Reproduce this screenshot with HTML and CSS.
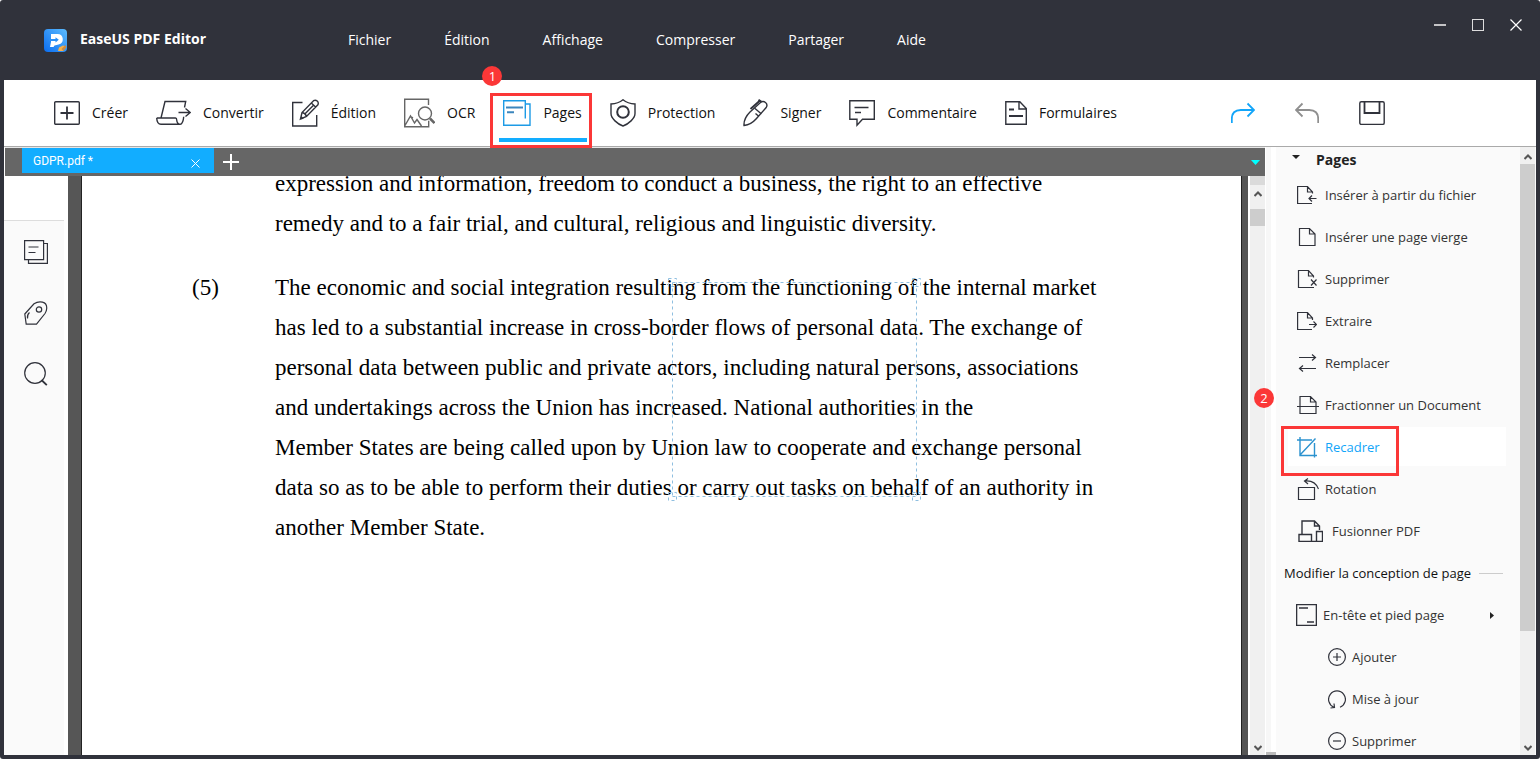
FILE: index.html
```html
<!DOCTYPE html>
<html lang="fr">
<head>
<meta charset="utf-8">
<title>EaseUS PDF Editor</title>
<link rel="stylesheet" href="styles.css">
</head>
<body>
<div class="window">
  <header class="titlebar">
    <svg class="logo" width="23" height="23" viewBox="0 0 23 23">
      <defs><linearGradient id="lg" x1="1" y1="0" x2="0" y2="1"><stop offset="0" stop-color="#5cbcff"/><stop offset="1" stop-color="#0a6df0"/></linearGradient></defs>
      <rect width="23" height="23" rx="4" fill="url(#lg)"/>
      <path d="M7 5h6.500a5.300 5.300 0 0 1 1 10.500L10.500 16.500 9.500 18H6l1-5z" fill="#fff"/>
      <path d="M5 10h6.500V8.300l3.300 2.500-3.300 2.700V12H5z" fill="#2b8ff5"/>
      <path d="M14 22l1-3.500 4-2 3 1-3 4.500z" fill="#f6b04a"/><path d="M17.500 20l4-4 1 2-3 4z" fill="#c98b45"/>
    </svg>
    <h1 class="app-name">EaseUS PDF Editor</h1>
    <nav class="menu">
      <button>Fichier</button><button>Édition</button><button>Affichage</button><button>Compresser</button><button>Partager</button><button>Aide</button>
    </nav>
    <div class="controls">
      <button aria-label="Réduire"><svg width="12" height="12"><path d="M0 6h12" stroke="#c4c4c6" stroke-width="2"/></svg></button>
      <button aria-label="Agrandir"><svg width="12" height="12"><rect x=".5" y=".5" width="11" height="11" fill="none" stroke="#ddd"/></svg></button>
      <button aria-label="Fermer"><svg width="12" height="12"><path d="M.5.5l11 11M11.500.5l-11 11" stroke="#fff" stroke-width="1.200"/></svg></button>
    </div>
  </header>

  <div class="toolbar">
    <button class="tool"><svg class="ico" width="26" height="28" viewBox="0 0 26 28"><rect x=".7" y="2.700" width="24.600" height="22.600" rx="1"/><path d="M6.500 14h13M13 7.500v13" stroke-width="1.800"/></svg>Créer</button>
    <button class="tool"><svg class="ico" width="35" height="28" viewBox="0 0 35 28"><path d="M28.500 8.500l1.200-6H9L5 19M.7 19h18.800q1.200 0 1.200 2 .3 4.300 4 4.300H5q-4 0-4.300-6.300M24.700 25.300q2.500-1.300 3-7.500M22.500 13.500H34M29.500 9.500l4.800 4-4.800 4"/></svg>Convertir</button>
    <button class="tool"><svg class="ico" width="27" height="28" viewBox="0 0 27 28"><path d="M10.500 3.500H.7v23.500h24V16"/><path d="M8.500 20l1.500-6.500L21.500 1.700q2-1.200 3.700.4t.7 3.700L14.500 17.500zM10 13.500q3.500.5 4.500 4M19.300 4l4.300 4M12.300 15.500l9-9M8.500 20l2.200-.7-1.500-1.500z"/></svg>Édition</button>
    <button class="tool"><svg class="ico gray" width="31" height="30" viewBox="0 0 31 30"><path d="M24.500 7V1.200H.7v27.600h24v-6M1 27.500l5.500-9.500 4 7 2.500-3.500 4.500 6.500M6 18.500l3 1.500"/><circle cx="21" cy="15.500" r="6.500"/><path d="M26 20.500l4.500 4.500" stroke-width="2.500"/></svg>OCR</button>
    <button class="tool active"><svg class="ico blue" width="28" height="28" viewBox="0 0 28 28"><path d="M.7 1.700h21.600v3.300H27v21.300H.7zM22.300 5v14.500"/><path d="M3 8.500h17M4 13.200h7" stroke="#3c86bd" stroke-width="2"/></svg>Pages
      <span class="mark mark-tool"></span><span class="step step-one">1</span></button>
    <button class="tool"><svg class="ico" width="26" height="28" viewBox="0 0 26 28"><path d="M13 .8c3 2.500 7 4 12 4.200v9.500c0 5-6.500 10.500-12 12.500C7.500 25 1 19.500 1 14.500V5C6 4.800 10 3.300 13 .8z"/><circle cx="13" cy="13" r="5.800" stroke-width="2"/></svg>Protection</button>
    <button class="tool"><svg class="ico" width="25" height="28" viewBox="0 0 25 28"><path d="M1 26.500c-.3-5 2-9.500 6-13.500L17.500 3.500q2.500-2 5 0t.7 5L13.500 19.500c-3.500 4-7.500 6.500-12.500 7zM12 9.500l6.500 5.500M12.500 14.500l3.500 3"/><path d="M7.500 10L17 1.500M15.500.8l3 2" stroke-width="1.900"/></svg>Signer</button>
    <button class="tool"><svg class="ico" width="26" height="28" viewBox="0 0 26 28"><path d="M.8 1.700h24.500v18.600H13.500L8 26.200v-5.900H.8z"/><path d="M5.500 8.500h14M6 13.500h6" stroke-width="1.700"/></svg>Commentaire</button>
    <button class="tool"><svg class="ico" width="22" height="28" viewBox="0 0 22 28"><path d="M.8 2.700h14l6.500 6.800v15.800H.8zM14 3v7h7"/><path d="M4 10.500h5M4 17h14" stroke-width="1.900"/></svg>Formulaires</button>
    <div class="history">
      <button aria-label="Rétablir"><svg class="ico bright" width="24" height="22" viewBox="0 0 24 22"><path d="M.8 21v-4q0-9 9-9H23M16.500 1.500l6.500 6.500-6.500 6.500" stroke-width="1.800"/></svg></button>
      <button aria-label="Annuler"><svg class="ico dim" width="24" height="22" viewBox="0 0 24 22"><path d="M23.200 21v-4q0-9-9-9H1M7.500 1.500L1 8l6.500 6.500" stroke-width="1.800"/></svg></button>
      <button aria-label="Enregistrer"><svg class="ico" width="26" height="26" viewBox="0 0 26 26"><rect x=".8" y="1.800" width="24.400" height="22.600" rx="1.500"/><path d="M5.500 2v11h15V2" stroke-width="1.800"/></svg></button>
    </div>
  </div>

  <div class="body">
    <div class="workspace">
      <div class="tabs">
        <div class="tab"><button class="tab-name">GDPR.pdf *</button><button class="tab-close" aria-label="Fermer l'onglet"><svg width="9" height="9"><path d="M.5.5l8 8M8.500.5l-8 8" stroke="#fff"/></svg></button></div>
        <button class="tab-add" aria-label="Nouvel onglet"><svg width="16" height="16"><path d="M0 8h16M8 0v16" stroke="#fff" stroke-width="2"/></svg></button>
        <button class="tab-list" aria-label="Liste des onglets"><svg width="9" height="5"><path d="M0 0h9L4.500 5z" fill="#0ff"/></svg></button>
      </div>
      <div class="viewer">
        <aside class="rail">
          <button aria-label="Vignettes"><svg class="ico thin" width="24" height="24" viewBox="0 0 24 24"><path d="M.6.600h19v19h-19zM20 3.500h3.400v19.900H4.500V20"/><path d="M4.500 7h10M4.500 12.500h7"/></svg></button>
          <button aria-label="Signets"><svg class="ico thin" width="24" height="24" viewBox="0 0 24 24"><path d="M.8 13L10 2.800Q14 .2 18.500 1.200t4.200 6.300q-.2 3-1.700 5L12.500 23.200H2.200z"/><circle cx="15" cy="8.500" r="2.700"/><path d="M3.500 17.500q-.5-4 2-6"/></svg></button>
          <button aria-label="Rechercher"><svg class="ico thin" width="24" height="24" viewBox="0 0 24 24"><circle cx="11" cy="11" r="10.300"/><path d="M17.500 18l5.300 5.200" stroke-width="1.800"/></svg></button>
        </aside>
        <main class="canvas">
          <article class="page">
            <p>expression and information, freedom to conduct a business, the right to an effective<br>remedy and to a fair trial, and cultural, religious and linguistic diversity.</p>
            <p><span class="num">(5)</span>The economic and social integration resulting from the functioning of the internal market<br>has led to a substantial increase in cross-border flows of personal data. The exchange of<br>personal data between public and private actors, including natural persons, associations<br>and undertakings across the Union has increased. National authorities in the<br>Member States are being called upon by Union law to cooperate and exchange personal<br>data so as to be able to perform their duties or carry out tasks on behalf of an authority in<br>another Member State.</p>
            <svg class="crop" width="254" height="224" viewBox="0 0 254 224"><path d="M4.500 4.500h244M4.500 218.500h244M4.500 4.500v214M248.500 4.500v214M.5.5h8v8h-8zM244.500.5h8v8h-8zM.5 214.500h8v8h-8zM244.500 214.500h8v8h-8z"/></svg>
          </article>
        </main>
        <div class="scroll scroll-doc">
          <svg width="8" height="6"><path d="M.5 5L4 1.500 7.500 5"/></svg><span class="thumb"></span><svg width="8" height="6"><path d="M.5 1L4 4.500 7.500 1"/></svg>
        </div>
      </div>
    </div>

    <aside class="panel">
      <div class="panel-main">
        <h2><svg width="8" height="5"><path d="M0 0h8L4 4z" fill="#222"/></svg>Pages</h2>
        <button class="row"><svg class="ico thin" width="20" height="20" viewBox="0 0 20 20"><path d="M15 18.500H.6V1.500h9.900l5 5.500v1.500M10.500 1.500V7h5M12 13.500h7.500M15 10.500l-3 3 3 3"/></svg>Insérer à partir du fichier</button>
        <button class="row"><svg class="ico thin" width="20" height="20" viewBox="0 0 20 20"><path d="M2.500 1.500h10l5.500 5.500v11.500H2.500zM12.500 1.500V7h5.500"/></svg>Insérer une page vierge</button>
        <button class="row"><svg class="ico thin" width="20" height="20" viewBox="0 0 20 20"><path d="M17 18.500H1.500V1.500h10l5 5.500v1.500M11.500 1.500V7h5M14 10.500l5.500 6M19.500 10.500l-5.500 6"/></svg>Supprimer</button>
        <button class="row"><svg class="ico thin" width="20" height="20" viewBox="0 0 20 20"><path d="M15 18.500H.6V1.500h9.900l5 5.500v2M10.500 1.500V7h5M12 13.500h7.500M16.500 10.500l3 3-3 3"/></svg>Extraire</button>
        <button class="row"><svg class="ico thin" width="20" height="20" viewBox="0 0 20 20"><path d="M2 4.500h16.500M15 1.500l3.500 3-3.500 3M2.500 15.500H19M6 12.500l-3.500 3 3.500 3"/></svg>Remplacer</button>
        <button class="row"><svg class="ico thin wide" width="22" height="20" viewBox="0 0 22 20"><path d="M3 9.500v-8h10.500L19 7v11.500H3V12M13.500 1.500V7H19M3 9.500V18M0 11.500h22"/></svg>Fractionner un Document</button>
        <button class="row selected"><svg class="ico thin" width="20" height="22" viewBox="0 0 20 22"><path d="M0 4h15M3 1v18.500h17M17.500 7v14.500M3 19L18.500 2.500" stroke-width="1.400"/></svg>Recadrer
          <span class="mark mark-row"></span><span class="step step-two">2</span></button>
        <button class="row"><svg class="ico thin wide" width="22" height="22" viewBox="0 0 22 22"><path d="M1.500 9.500h16v12h-16zM8 3q10-1 13.500 8M11 .5L7.500 3 11 6"/></svg>Rotation</button>
        <button class="row merge"><svg class="ico thin" width="25" height="22" viewBox="0 0 25 22"><path d="M4 14V1h12.500l5 5v4M16.500 1v5h5M1 14.500h12.500v7H1zM13.500 21.500h5M18.500 11.500h6v10h-6z" stroke-width="1.400"/></svg>Fusionner PDF</button>
        <h3>Modifier la conception de page</h3>
        <button class="row header-row"><svg class="ico" width="21" height="22" viewBox="0 0 21 22"><path d="M.6.600h19.800v20.800H.6z"/><path d="M3 4h9M11 18h7"/></svg>En-tête et pied page<svg class="more" width="4" height="7"><path d="M0 0l4 3.500L0 7z" fill="#222"/></svg></button>
        <button class="row sub"><svg class="ico thin" width="18" height="18" viewBox="0 0 18 18"><circle cx="9" cy="9" r="8.400"/><path d="M5 9h8M9 5v8"/></svg>Ajouter</button>
        <button class="row sub"><svg class="ico thin" width="18" height="19" viewBox="0 0 18 19"><path d="M12 17.200A8.400 8.400 0 1 0 6 17.200M2.500 18l4-.5L6 13.500"/></svg>Mise à jour</button>
        <button class="row sub"><svg class="ico thin" width="18" height="18" viewBox="0 0 18 18"><circle cx="9" cy="9" r="8.400"/><path d="M5 9h8"/></svg>Supprimer</button>
      </div>
      <div class="scroll scroll-panel">
        <svg width="8" height="6"><path d="M.5 5L4 1.500 7.500 5"/></svg><span class="thumb"></span><svg width="8" height="6"><path d="M.5 1L4 4.500 7.500 1"/></svg>
      </div>
    </aside>
  </div>
</div>
</body>
</html>
```
FILE: styles.css
```css
* { box-sizing: border-box; }
body { margin: 0; background: #fff; color: #111; font: 14px/20px "Open Sans", "Noto Sans", sans-serif; }
button { display: flex; align-items: center; margin: 0; padding: 0; border: 0; background: none; color: inherit; font: inherit; text-align: left; white-space: nowrap; }
svg { display: block; flex: none; }
h1, h2, h3, p { margin: 0; }

.window { display: flex; flex-direction: column; height: 100vh; padding: 0 4px 4px; border-radius: 3px; background: #30323b; overflow: hidden; }

.titlebar { display: flex; align-items: center; flex: none; height: 80px; padding-left: 40px; color: #fff; }
.app-name { width: 281px; padding: 0 0 2px 13px; font-size: 14px; font-weight: 700; line-height: 20px; }
.menu { display: flex; gap: 53px; }
.controls { display: flex; align-self: flex-start; gap: 26px; margin-left: auto; padding: 19px 14px 0 0; }

.toolbar { display: flex; align-items: center; flex: none; gap: 28px; height: 67px; padding: 0 151px 0 50px; border-bottom: 1px solid #aaa; background: #fff; }
.tool { position: relative; gap: 12px; height: 66px; }
.tool.active::after { content: ""; position: absolute; right: -5px; bottom: 4px; left: -4px; height: 4px; background: #12adff; }
.history { display: flex; align-items: center; gap: 40px; margin-left: auto; }

.ico { fill: none; stroke: #30323b; stroke-width: 1.4; }
.ico.thin { stroke-width: 1.2; }
.ico.gray { stroke: #666; }
.ico.blue { stroke: #1d9be6; }
.ico.bright { stroke: #12a5f9; }
.ico.dim { stroke: #8f8f8f; }

.mark { position: absolute; border: 3px solid #fb3737; }
.mark-tool { z-index: 2; top: 13px; right: -10px; bottom: -2px; left: -13px; }
.mark-row { top: 0; left: -7px; width: 118px; height: 50px; }
.step { position: absolute; width: 20px; height: 20px; border-radius: 50%; background: #fb3737; color: #fff; font-size: 13px; line-height: 20px; text-align: center; }
.step-one { z-index: 2; top: -14px; left: -21px; }
.step-two { top: -38px; left: -34px; }

.body { display: flex; flex: 1; min-height: 0; background: #fff; }
.workspace { display: flex; flex: 1; flex-direction: column; min-width: 0; }
.tabs { display: flex; flex: none; align-items: center; height: 29px; margin: 0 1px; padding: 0 5px 0 17px; border-top: 1px solid #e6e6e6; background: #666; color: #fff; }
.tab { display: flex; align-self: flex-start; align-items: center; justify-content: space-between; width: 192px; height: 25px; padding: 0 14px 0 11px; background: #12adff; font: 12px/20px Roboto, sans-serif; }
.tab-close { padding-top: 6px; }
.tab-add { margin-left: 9px; }
.tab-list { margin-left: auto; }

.viewer { display: flex; flex: 1; min-height: 0; }
.rail { display: flex; flex-direction: column; gap: 37px; width: 60px; margin-top: 44px; padding: 19px 20px; border-top: 1px solid #ddd; background: #fafafa; }
.canvas { flex: 1; min-width: 0; margin-left: 4px; padding: 0 6px 0 13px; background: #565656; overflow: hidden; }
.page { position: relative; height: 100%; padding-left: 193px; border: solid #222; border-width: 0 1px; background: #fff; color: #000; font: 23px/40px "Liberation Serif", serif; white-space: nowrap; }
.page p:first-child { margin-top: -12px; }
.page p + p { margin-top: 24px; }
.canvas .page { display: flex; flex-direction: column; }
.num { position: absolute; left: 110px; }
.crop { position: absolute; top: 102px; left: 586px; fill: none; stroke: #8fbfe0; stroke-dasharray: 3 3; }

.scroll { display: flex; flex: none; flex-direction: column; align-items: center; width: 15px; background: #f0f0f0; fill: none; stroke: #555; stroke-width: 2; }
.thumb { width: 100%; background: #cdcdcd; }
.scroll svg:last-child { margin-top: auto; }
.scroll-doc { margin: 0 1px 0 2px; padding: 15px 0 4px; background: linear-gradient(#dadada 9px, #f0f0f0 9px); }
.scroll-doc .thumb { height: 17px; margin-top: 12px; }

.panel { display: flex; flex: none; width: 270px; padding-right: 1px; background: #fafafa; }
.panel-main { flex: 1; min-width: 0; padding: 0 14px 0 22px; background: linear-gradient(#bbb, #bbb) 0 100% / 10px 3px no-repeat, linear-gradient(90deg, #f7f7f7 5px, #fff 5px, #fff 10px, #fafafa 10px); color: #333; font-size: 13px; overflow-x: visible; overflow-y: clip; }
.panel h2 { display: flex; gap: 16px; align-items: center; height: 25px; margin-bottom: 2px; padding-left: 4px; font-size: 14px; color: #222; }
.panel h2 svg { margin-bottom: 5px; }
.row { position: relative; gap: 8px; width: 100%; height: 42px; padding-left: 9px; }
.row .wide { margin-right: -2px; }
.row.selected { z-index: 1; background: linear-gradient(#fff, #fff) 0 1px / 100% 39px no-repeat; color: #12a5f9; }
.row.selected .ico { stroke: #2b92cf; }
.row.merge { gap: 9px; padding-left: 10px; }
.panel h3 { display: flex; align-items: center; gap: 8px; height: 42px; margin-left: -4px; color: #111; font-size: 13px; font-weight: 400; white-space: nowrap; }
.panel h3::after { content: ""; flex: 1; height: 1px; margin-right: 3px; background: #ccc; }
.header-row { gap: 6px; padding-left: 8px; }
.more { margin: 0 12px 0 auto; }
.row.sub { gap: 6px; padding-left: 40px; }
.scroll-panel { padding: 7px 0 4px; }
.scroll-panel .thumb { height: 467px; margin-top: 4px; }
```
